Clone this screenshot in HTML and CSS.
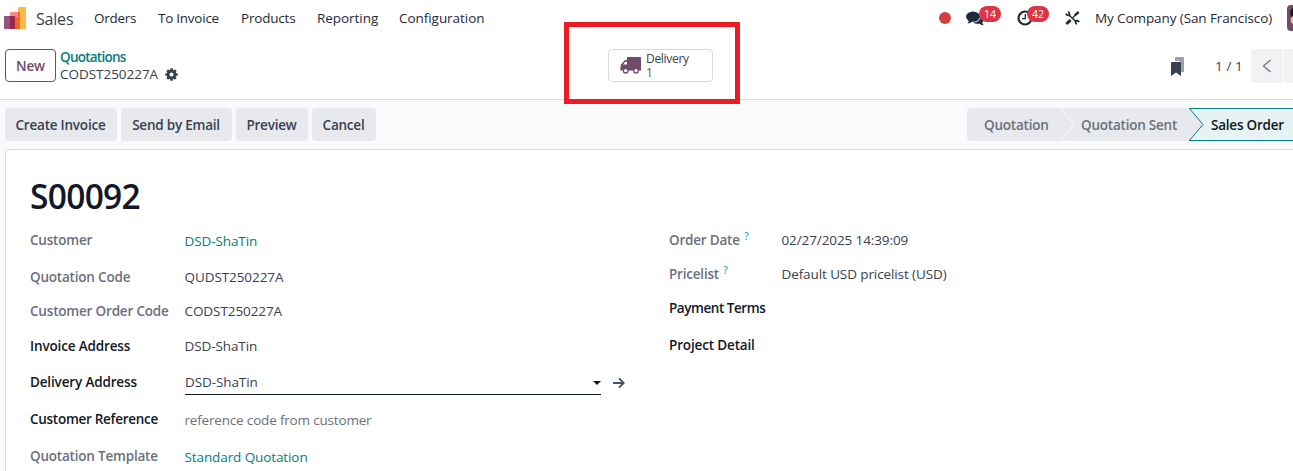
FILE: index.html
```
<!DOCTYPE html>
<html lang="en">
<head>
<meta charset="utf-8">
<title>Sales Order</title>
<link rel="stylesheet" href="styles.css">
</head>
<body>
<div class="app">
  <header class="navbar">
    <svg class="logo" width="22" height="22" viewBox="0 0 22 22">
      <rect x="14" y="0" width="8" height="22" rx="1" fill="#fbb945"/>
      <path d="M6 6a1 1 0 0 1 1-1h8v17H6z" fill="#fc868b"/>
      <path d="M11 10h4V5h1v17h-5z" fill="#f9622b"/>
      <path d="M14 5h2v17h-5v-12h3z" fill="#f9622b"/>
      <path d="M0 10a1 1 0 0 1 1-1h9v13H1a1 1 0 0 1-1-1z" fill="#985184"/>
      <path d="M6 9h5v13H6z" fill="#962b48"/>
    </svg>
    <span class="brand">Sales</span>
    <nav class="menu">
      <span class="orders">Orders</span>
      <span class="to-invoice">To Invoice</span>
      <span class="products">Products</span>
      <span class="reporting">Reporting</span>
      <span class="configuration">Configuration</span>
    </nav>
    <div class="systray">
      <i class="dot"></i>
      <span class="tray chat">
        <svg width="18" height="15" viewBox="0 0 18 15" fill="#1f2937">
          <ellipse cx="7" cy="5.600" rx="7" ry="5.200"/>
          <path d="M3 8.500Q3 11.500 1.300 12.500Q4.500 12.500 6.500 10z"/>
          <path d="M15.500 4.500Q18 6 18 8.200Q18 10.100 16.200 11.500Q16.500 13.300 17.800 14.300Q15 14.300 13.600 12.700Q9.500 13.300 7 11.700Q14.500 11 15.500 4.500z"/>
        </svg>
        <b class="badge">14</b>
      </span>
      <span class="tray clock">
        <svg width="16" height="16" viewBox="0 0 16 16" fill="none" stroke="#1f2937">
          <circle cx="8" cy="8" r="6.500" stroke-width="2.200"/><path d="M8.300 4v4.600H5" stroke-width="1.300"/>
        </svg>
        <b class="badge">42</b>
      </span>
      <svg class="tools" width="15" height="14" viewBox="0 0 15 14" fill="none" stroke="#1f2937">
        <path d="M3.500 3.800L11.300 10.800" stroke-width="1.500"/>
        <path d="M.8 2.600Q2 5 4.600 4.200Q5 2 3 .8" stroke-width="1.700"/>
        <path d="M14.200 11.200Q13 9 10.500 9.800Q10 12 11.800 13.300" stroke-width="1.700"/>
        <path d="M1.300 13L5.600 8.900" stroke-width="2.800"/>
        <path d="M7 7.500L10.500 4" stroke-width="1.200"/>
        <path d="M9.800 4.400L13.600 1" stroke-width="2.400"/>
      </svg>
      <span class="company">My Company (San Francisco)</span>
      <svg class="avatar" width="26" height="26" viewBox="0 0 26 26">
        <rect width="26" height="26" rx="4" fill="#744a67"/>
        <circle cx="9" cy="8" r="6" fill="#1f1a22"/><circle cx="8" cy="15" r="4.500" fill="#f0b49a"/>
      </svg>
    </div>
  </header>

  <section class="control-panel">
    <button class="btn-new">New</button>
    <div class="breadcrumb">
      <span class="crumb-link">Quotations</span>
      <span class="crumb-current">CODST250227A
        <svg width="13" height="13" viewBox="-6.500 -6.500 13 13">
          <circle r="3.400" fill="none" stroke="#374151" stroke-width="2.800"/>
          <g stroke="#374151" stroke-width="2.600"><path d="M0-6.200V-4M0 6.200V4M-6.200 0H-4M6.200 0H4M-4.300-4.300L-3-3M4.300 4.300L3 3M-4.300 4.300L-3 3M4.300-4.300L3-3"/></g>
        </svg>
      </span>
    </div>
    <div class="stat-area">
      <button class="stat">
        <svg width="21" height="17" viewBox="0 0 21 17">
          <path d="M8 0h12a1 1 0 0 1 1 1v12.500H1.200a1 1 0 0 1-1-1L1 7.500L4.500 3.500Q5 3 6 3H7V1q0-1 1-1z" fill="#714b67"/>
          <path d="M3 7.500L5.300 4.800H7v2.700z" fill="#fff"/>
          <circle cx="5.700" cy="13.700" r="2.300" fill="#fff" stroke="#714b67" stroke-width="1.300"/>
          <circle cx="16" cy="13.700" r="2.300" fill="#fff" stroke="#714b67" stroke-width="1.300"/>
        </svg>
        <span class="stat-text"><span>Delivery</span><span class="stat-value">1</span></span>
      </button>
      <div class="highlight"></div>
    </div>
    <div class="pager">
      <svg width="13" height="19" viewBox="0 0 13 19">
        <path d="M4 1q0-1 1-1h7q1 0 1 1v14h-2L9 13.500V4H4z" fill="#9ca0ae"/>
        <path d="M0 6q0-1 1-1h8q1 0 1 1v13l-5-3.500L0 19z" fill="#374151"/>
      </svg>
      <span class="pager-count">1 / 1</span>
      <span class="pager-btn"><svg width="10" height="14" viewBox="0 0 10 14"><path d="M8.500 1L1.500 7l7 6" fill="none" stroke="#737982" stroke-width="1.400"/></svg></span>
      <span class="pager-btn"></span>
    </div>
  </section>

  <main class="content">
    <div class="statusbar">
      <div class="actions">
        <button class="act create">Create Invoice</button>
        <button class="act send">Send by Email</button>
        <button class="act preview">Preview</button>
        <button class="act cancel">Cancel</button>
      </div>
      <div class="stages">
        <div class="stage first">Quotation<svg class="chevron" width="15" height="33"><path d="M.5 0L14 16.500L.5 33" fill="#e7e9ed" stroke="#f9fafb"/></svg></div>
        <div class="stage second">Quotation Sent<svg class="chevron" width="15" height="33"><path d="M0 0L14 16.500L0 33" fill="#e7e9ed" stroke="#017e84"/></svg></div>
        <div class="stage active">Sales Order</div>
      </div>
    </div>
    <div class="sheet">
      <h1>S00092</h1>
      <div class="fields">
        <div class="group left">
          <div class="row h37"><label>Customer</label><span class="value link low">DSD-ShaTin</span></div>
          <div class="row h36"><label>Quotation Code</label><span class="value code">QUDST250227A</span></div>
          <div class="row h33"><label class="wide">Customer Order Code</label><span class="value code">CODST250227A</span></div>
          <div class="row h36"><label class="dark roomy">Invoice Address</label><span class="value">DSD-ShaTin</span></div>
          <div class="row h37"><label class="dark roomy">Delivery Address</label><span class="value select">DSD-ShaTin<i class="caret"></i></span>
            <svg class="arrow" width="12" height="12" viewBox="0 0 12 12" fill="none" stroke="#4b5160" stroke-width="1.900"><path d="M0 6h11M6 1.300L10.700 6L6 10.700"/></svg></div>
          <div class="row h37"><label class="dark refer">Customer Reference</label><span class="value placeholder low">reference code from customer</span></div>
          <div class="row h37"><label>Quotation Template</label><span class="value link low">Standard Quotation</span></div>
        </div>
        <div class="group right">
          <div class="row h37"><label>Order Date <sup>?</sup></label><span class="value date">02/27/2025 14:39:09</span></div>
          <div class="row h31"><label>Pricelist <sup>?</sup></label><span class="value">Default USD pricelist (USD)</span></div>
          <div class="row h37"><label class="dark pay">Payment Terms</label></div>
          <div class="row h37"><label class="dark roomy">Project Detail</label></div>
        </div>
      </div>
    </div>
  </main>
</div>
</body>
</html>
```
FILE: styles.css
```
* { box-sizing: border-box; }
body {
  margin: 0;
  overflow: hidden;
  background: #fff;
  color: #374151;
  font: 13.5px/20px "Open Sans", "Noto Sans", sans-serif;
  letter-spacing: -0.1px;
  white-space: nowrap;
}
button { font: inherit; letter-spacing: inherit; color: inherit; margin: 0; padding: 0; white-space: nowrap; }
svg { display: block; flex: none; }
.app { height: 471px; display: flex; flex-direction: column; overflow: hidden; }

/* Top bar */
.navbar { height: 37px; flex: none; display: flex; align-items: center; padding-left: 4px; color: #1f2937; }
.logo { margin-top: -1px; }
.brand { width: 58px; padding-left: 10px; font-size: 16px; color: #374151; letter-spacing: -0.2px; flex: none; }
.menu { display: flex; padding-left: 10px; margin-top: -2px; }
.menu span { flex: none; }
.menu .orders { width: 64px; letter-spacing: -0.3px; }
.menu .to-invoice { width: 83px; letter-spacing: -0.25px; }
.menu .products { width: 76px; letter-spacing: -0.2px; }
.menu .reporting { width: 82px; letter-spacing: -0.05px; }
.menu .configuration { letter-spacing: -0.05px; }
.systray { margin-left: auto; width: 355px; flex: none; display: flex; align-items: center; }
.dot { width: 12px; height: 12px; margin: -1px 0 0 1px; border-radius: 50%; background: #d23f3a; flex: none; }
.tray { position: relative; flex: none; margin-top: -1px; }
.chat { margin-left: 15px; width: 51px; }
.clock { width: 48px; }
.badge {
  position: absolute; left: 13px; top: -5px; width: 22px; height: 16px; border-radius: 8px;
  background: #dc3545; color: #fff; font-size: 10.5px; font-weight: 400; line-height: 16px; text-align: center;
}
.clock .badge { left: 10px; top: -4px; }
.tools { margin-top: -1px; }
.company { width: 192px; margin: -2px 0 0 15px; letter-spacing: -0.1px; flex: none; }
.avatar { margin-top: -1px; }

/* Breadcrumb, smart button and pager */
.control-panel { height: 63px; flex: none; display: flex; align-items: flex-start; padding: 12px 0 0 5px; border-bottom: 1px solid #d8dadd; }
.btn-new { width: 51px; height: 33px; border: 1px solid #714b67; border-radius: 4px; background: #fff; color: #714b67; font-weight: 600; flex: none; }
.breadcrumb { width: 504px; padding-left: 4px; display: flex; flex-direction: column; line-height: 16px; flex: none; }
.crumb-link { color: #017e84; font-weight: 600; letter-spacing: -0.75px; }
.crumb-current { display: flex; align-items: center; gap: 7px; letter-spacing: -0.03px; line-height: 18px; }
.stat-area { position: relative; padding-left: 48px; flex: none; }
.stat { width: 105px; height: 33px; display: flex; align-items: center; gap: 5px; padding-left: 11px; border: 1px solid #d8dadd; border-radius: 4px; background: #fff; }
.stat-text { display: flex; flex-direction: column; text-align: left; font-size: 12px; line-height: 14px; letter-spacing: -0.3px; }
.stat-value { color: #714b67; }
.highlight { position: absolute; left: 4px; top: -27px; width: 176px; height: 82px; border: 5px solid #ed1c24; }
.pager { margin-left: auto; width: 122px; flex: none; display: flex; align-items: center; }
.pager-count { width: 67px; padding-left: 31px; letter-spacing: 0.1px; flex: none; }
.pager-btn { width: 32px; height: 34px; margin-right: 1px; background: #f1f2f4; display: flex; align-items: center; justify-content: center; flex: none; }
.pager-count + .pager-btn { border-radius: 4px 0 0 4px; }

/* Form */
.content { flex: 1; background: #f9fafb; padding: 8px 0 0 5px; }
.statusbar { display: flex; height: 33px; font-weight: 600; letter-spacing: -0.22px; }
.actions { display: flex; gap: 4px; }
.act { height: 33px; border: 0; border-radius: 4px; background: #e7e9ed; padding-right: 1px; }
.create { width: 112px; }
.send { width: 111px; }
.preview { width: 72px; }
.cancel { width: 64px; }
.stages { margin-left: auto; display: flex; color: #6b707d; }
.stage { position: relative; height: 33px; line-height: 35px; background: #e7e9ed; flex: none; }
.first { width: 93px; padding-left: 17px; border-radius: 4px 0 0 4px; }
.second { width: 129px; padding-left: 21px; }
.active { width: 104px; padding-left: 22px; line-height: 33px; background: #e6f2f3; border: 1px solid #017e84; border-width: 1px 0; color: #111827; }
.chevron { position: absolute; left: 100%; top: 0; z-index: 1; }
.sheet { margin-top: 8px; height: 330px; width: 1300px; background: #fff; border: 1px solid #d8dadd; border-radius: 4px; padding: 24px 0 0 24px; }
h1 { margin: 0; height: 48px; line-height: 44px; font-size: 33.500px; font-weight: 600; letter-spacing: -0.7px; color: #111827; }
.fields { display: flex; }
.group { display: flex; flex-direction: column; }
.left { width: 639px; }
.row { display: flex; align-items: center; flex: none; }
.h31 { height: 31px; }
.h33 { height: 33px; }
.h36 { height: 36px; }
.h37 { height: 37px; }
label { width: 155px; margin-top: -1px; font-weight: 600; letter-spacing: -0.2px; color: #6b707d; flex: none; }
.right label { width: 113px; margin-top: -2px; }
label.dark { color: #111827; }
label.wide { letter-spacing: -0.19px; }
label.roomy { letter-spacing: -0.15px; }
label.refer { letter-spacing: -0.28px; }
label.pay { letter-spacing: -0.45px; }
sup { position: relative; top: -5px; margin-left: 1px; font-size: 10px; line-height: 0; vertical-align: baseline; color: #4fa9c7; }
.value { margin: -1px 0 0 -0.5px; }
.value.low { margin-top: 1px; }
.right .value { margin-top: -2px; }
.value.link { color: #017e84; }
.value.code { letter-spacing: -0.08px; }
.value.placeholder { color: #6b707d; letter-spacing: -0.18px; }
.value.select { width: 416px; height: 25px; line-height: 24px; margin: 0; border-bottom: 1px solid #111827; display: flex; justify-content: space-between; align-items: center; }
.caret { border: 4px solid transparent; border-top-color: #111827; border-bottom: 0; margin-top: 1px; }
.arrow { margin-left: 12px; }
```
